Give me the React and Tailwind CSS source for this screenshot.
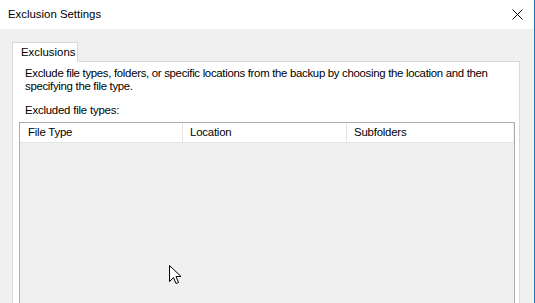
import React from 'react';

function CloseIcon() {
  return (
    <svg width="11" height="11" viewBox="0 0 11 11" className="block">
      <path d="M0.5 0.5 L10.5 10.5 M10.5 0.5 L0.5 10.5" stroke="#000" strokeWidth="1" fill="none" />
    </svg>
  );
}

function Cursor() {
  return (
    <svg width="13" height="21" viewBox="0 0 13 21" className="absolute left-[169px] top-[265px]">
      <path
        d="M0.5 0.5 L0.5 16.5 L4.5 12.5 L7 18.5 L9.5 17.5 L7 11.5 L12 11.5 Z"
        fill="#fff"
        stroke="#000"
        strokeWidth="1"
        strokeLinejoin="miter"
      />
    </svg>
  );
}

export default function App() {
  return (
    <div
      className="relative w-[535px] h-[303px] overflow-hidden flex flex-col bg-[#f0f0f0] border-r border-[#1979ca] text-[11.4px] text-black"
      style={{ fontFamily: '"Liberation Sans", Arial, sans-serif' }}
    >
      {/* title bar */}
      <div className="h-[29px] shrink-0 bg-white flex items-center justify-between pl-[8px] pr-[11px]">
        <span className="leading-none">Exclusion Settings</span>
        <CloseIcon />
      </div>

      {/* body */}
      <div className="shrink-0 flex flex-col pl-[12px] pr-[14px] pt-[13px]">
        <div className="flex">
          <div className="relative z-10 -mb-px w-[66px] h-[20px] bg-white border border-b-0 border-[#d9d9d9] pl-[8px] flex items-center">
            Exclusions
          </div>
        </div>
        <div className="bg-white border border-[#d9d9d9] flex flex-col pl-[6px] pr-[4px]">
          <p className="pl-[6px] pt-[5px] leading-[13px] whitespace-nowrap tracking-[-0.3px]">
            Exclude file types, folders, or specific locations from the backup by choosing the location and then
            <br />
            specifying the file type.
          </p>
          <p className="pl-[6px] mt-[10px] leading-[14px] tracking-[-0.2px]">Excluded file types:</p>
          <div className="mt-[5px] h-[220px] border border-[#adadad] bg-[#f0f0f0] flex flex-col">
            <div className="h-[20px] bg-white border-b border-[#e5e5e5] mr-[1px] flex tracking-[-0.2px]">
              <div className="w-[163px] border-r border-[#e5e5e5] pl-[8px] flex items-center">File Type</div>
              <div className="w-[164px] border-r border-[#e5e5e5] pl-[7px] flex items-center">Location</div>
              <div className="flex-1 pl-[7px] flex items-center">Subfolders</div>
            </div>
          </div>
        </div>
      </div>

      <Cursor />
    </div>
  );
}
